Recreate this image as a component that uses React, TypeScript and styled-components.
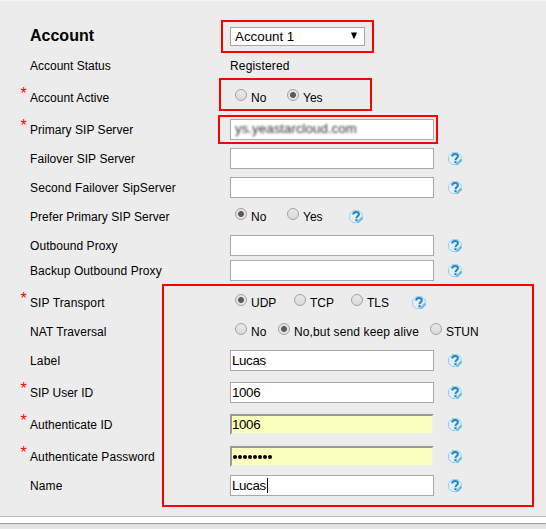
import React from "react";
import styled, { createGlobalStyle, css } from "styled-components";

const GlobalStyle = createGlobalStyle`
  *, *::before, *::after { box-sizing: border-box; }
  body {
    margin: 0;
    background: #ececec;
    overflow: hidden;
    font-family: "Liberation Sans", Arial, sans-serif;
    font-size: 12px;
    color: #000;
  }
`;

const Page = styled.main`
  position: relative;
  display: flex;
  flex-direction: column;
  width: 546px;
  height: 529px;
  border-top: 1px solid #f6f6f6;
  background: #ececec;
  overflow: hidden;
`;

const Form = styled.form`
  display: flex;
  flex-direction: column;
  height: 515px;
  padding-top: 21px;
  flex: none;
`;

const Row = styled.div<{ $height: number }>`
  display: grid;
  grid-template-columns: 30px 200px 218px 1fr;
  grid-template-rows: 100%;
  align-items: end;
  flex: none;
  height: ${(p) => p.$height}px;
`;

const Star = styled.span`
  align-self: start;
  height: 20px;
  margin-top: 4px;
  padding-left: 20.5px;
  font-size: 16px;
  line-height: 20px;
  color: #f00;
`;

const Label = styled.label<{ $spacing?: number }>`
  grid-column: 2;
  height: 29px;
  padding-top: 1px;
  line-height: 29px;
  white-space: nowrap;
  letter-spacing: ${(p) => p.$spacing ?? 0}px;
`;

const Title = styled.h1`
  grid-column: 2;
  height: 30px;
  margin: 0;
  font-size: 16px;
  line-height: 30px;
`;

const Value = styled.div`
  grid-column: 3;
  height: 29px;
  padding-top: 1px;
  line-height: 29px;
  letter-spacing: 0.15px;
`;

const Select = styled.div`
  grid-column: 3;
  display: flex;
  align-items: center;
  justify-content: space-between;
  width: 135px;
  height: 19px;
  margin-bottom: 5px;
  padding: 0 6px 0 4px;
  border: 1px solid #a6a6a6;
  background: #fff;
  font-size: 13.33px;
  line-height: 17px;
`;

const Arrow = styled.svg`
  width: 8px;
  height: 7px;
  margin-bottom: 2px;
`;

const Field = styled.div<{ $autofill?: boolean }>`
  grid-column: 3;
  display: flex;
  align-items: center;
  width: 204px;
  height: 21px;
  margin-bottom: 4px;
  padding-left: 1px;
  border: 1px solid #a9a9a9;
  background: #fff;
  font-size: 13.33px;
  line-height: 19px;
  ${(p) =>
    p.$autofill &&
    css`
      padding-left: 0;
      border: 2px solid;
      border-color: #999 #eee #eee #999;
      background: #faffbd;
      line-height: 17px;
    `}
`;

const FieldText = styled.span`
  letter-spacing: -0.35px;
`;

const Masked = styled.span`
  margin: -3px 0 0 3px;
  color: #333;
  font-size: 13.33px;
  letter-spacing: 0.02px;
  filter: blur(1.3px);
`;

const Caret = styled.span`
  width: 1px;
  height: 15px;
  margin-left: 1px;
  background: #000;
`;

const Dots = styled.span`
  display: flex;
  gap: 1px;
  padding-left: 1px;
`;

const Dot = styled.span`
  width: 4px;
  height: 4px;
  border-radius: 50%;
  background: #000;
`;

const Options = styled.div`
  grid-column: 3 / 5;
  display: flex;
  height: 29px;
  padding-left: 5px;
`;

const Option = styled.span<{ $width: number; $spacing?: number }>`
  display: flex;
  flex: none;
  gap: 4px;
  width: ${(p) => p.$width}px;
  line-height: 31px;
  white-space: nowrap;
  letter-spacing: ${(p) => p.$spacing ?? 0}px;
`;

const Radio = styled.i<{ $on?: boolean }>`
  flex: none;
  width: 12px;
  height: 12px;
  margin-top: 6px;
  border: 1px solid #a3a3a3;
  border-radius: 50%;
  background: ${(p) =>
    p.$on
      ? "radial-gradient(circle, #5c5c5c 0 2.6px, #e4e4e4 3.3px)"
      : "linear-gradient(#e9e9e9, #dadada)"};
`;

const HelpIcon = styled.svg`
  display: block;
  width: 14px;
  height: 14px;
  margin-bottom: 7px;
`;

const OptionHelp = styled.span`
  align-self: flex-end;
`;

const Highlight = styled.div<{ $x: number; $y: number; $w: number; $h: number }>`
  position: absolute;
  left: ${(p) => p.$x}px;
  top: ${(p) => p.$y - 1}px;
  width: ${(p) => p.$w}px;
  height: ${(p) => p.$h}px;
  border: 2px solid #f00;
  pointer-events: none;
`;

const Divider = styled.div`
  flex: none;
  height: 8px;
  border-top: 1px solid #b9b9b9;
  border-bottom: 1px solid #a2a5a4;
  background: #fff;
`;

const Footer = styled.footer`
  flex: 1;
  background: linear-gradient(#dcdedd, #e9e9e9);
`;

const Help = () => (
  <HelpIcon viewBox="0 0 14 14">
    <path
      d="M8.5 12.5H4.2L.6 9.6V4.2L4 .6h6L13.2 4v4.4"
      fill="#e6eff4"
      stroke="#8fcdec"
      strokeWidth="0.9"
    />
    <path d="M14 7.2v1.8L9.8 13H8v-1l4-4.8z" fill="#6cbde6" />
    <path
      d="M4.2 4.6C4.2 3 5.2 2 7 2s2.9.8 2.9 2.2c0 1.8-2.4 1.9-2.4 4"
      fill="none"
      stroke="#1d86c6"
      strokeWidth="2"
    />
    <rect x="6.4" y="9.2" width="2.2" height="2" fill="#1d86c6" />
  </HelpIcon>
);

type Choice = { text: string; width: number; on?: boolean; spacing?: number };

const Choices = ({ items, help }: { items: Choice[]; help?: boolean }) => (
  <Options>
    {items.map((item) => (
      <Option key={item.text} $width={item.width} $spacing={item.spacing}>
        <Radio $on={item.on} />
        {item.text}
      </Option>
    ))}
    {help && (
      <OptionHelp>
        <Help />
      </OptionHelp>
    )}
  </Options>
);

type LineProps = {
  label: string;
  required?: boolean;
  height?: number;
  spacing?: number;
  children: React.ReactNode;
};

const Line = ({ label, required, height, spacing, children }: LineProps) => (
  <Row $height={height ?? (required ? 32 : 29)}>
    {required && <Star>*</Star>}
    <Label $spacing={spacing}>{label}</Label>
    {children}
  </Row>
);

const TextField = ({ value, focused, autofill }: { value?: string; focused?: boolean; autofill?: boolean }) => (
  <>
    <Field $autofill={autofill}>
      {value && <FieldText>{value}</FieldText>}
      {focused && <Caret />}
    </Field>
    <Help />
  </>
);

export default function App() {
  return (
    <>
      <GlobalStyle />
      <Page>
        <Form>
          <Row $height={29}>
            <Title>Account</Title>
            <Select>
              Account 1
              <Arrow viewBox="0 0 8 7">
                <path d="M1 0.5h6L4.4 6.5h-.8z" fill="#000" />
              </Arrow>
            </Select>
          </Row>
          <Line label="Account Status">
            <Value>Registered</Value>
          </Line>
          <Line label="Account Active" required spacing={0.04}>
            <Choices items={[{ text: "No", width: 52 }, { text: "Yes", width: 62, on: true }]} />
          </Line>
          <Line label="Primary SIP Server" required spacing={0.04}>
            <Field>
              <Masked>ys.yeastarcloud.com</Masked>
            </Field>
          </Line>
          <Line label="Failover SIP Server" spacing={0.07}>
            <TextField />
          </Line>
          <Line label="Second Failover SipServer" spacing={0.13}>
            <TextField />
          </Line>
          <Line label="Prefer Primary SIP Server" spacing={0.04}>
            <Choices items={[{ text: "No", width: 52, on: true }, { text: "Yes", width: 62 }]} help />
          </Line>
          <Line label="Outbound Proxy" spacing={0.06}>
            <TextField />
          </Line>
          <Line label="Backup Outbound Proxy" height={25} spacing={0.08}>
            <TextField />
          </Line>
          <Line label="SIP Transport" required spacing={0.12}>
            <Choices
              items={[
                { text: "UDP", width: 59, on: true },
                { text: "TCP", width: 57 },
                { text: "TLS", width: 61 },
              ]}
              help
            />
          </Line>
          <Line label="NAT Traversal" spacing={0.08}>
            <Choices
              items={[
                { text: "No", width: 43 },
                { text: "No,but send keep alive", width: 152, on: true, spacing: 0.13 },
                { text: "STUN", width: 60 },
              ]}
            />
          </Line>
          <Line label="Label" spacing={0.2}>
            <TextField value="Lucas" />
          </Line>
          <Line label="SIP User ID" required spacing={0}>
            <TextField value="1006" />
          </Line>
          <Line label="Authenticate ID" required spacing={0.03}>
            <TextField value="1006" autofill />
          </Line>
          <Line label="Authenticate Password" required spacing={0.1}>
            <Field $autofill>
              <Dots>
                {Array.from({ length: 8 }, (_, i) => (
                  <Dot key={i} />
                ))}
              </Dots>
            </Field>
            <Help />
          </Line>
          <Line label="Name" spacing={0.1}>
            <TextField value="Lucas" focused />
          </Line>
        </Form>
        <Divider />
        <Footer />
        <Highlight $x={221} $y={20} $w={153} $h={33} />
        <Highlight $x={219} $y={78} $w={153} $h={33} />
        <Highlight $x={218} $y={115} $w={220} $h={29} />
        <Highlight $x={162} $y={284} $w={372} $h={223} />
      </Page>
    </>
  );
}
